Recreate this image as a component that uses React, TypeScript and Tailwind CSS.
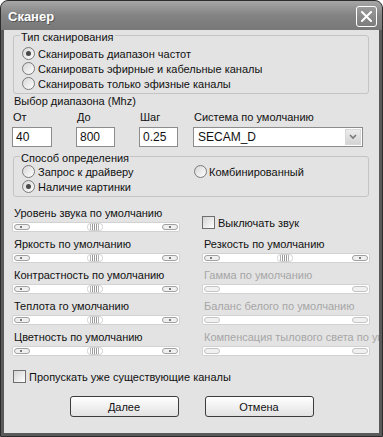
import React from "react";

function Radio({ checked }: { checked?: boolean }) {
  return (
    <span className="w-[13px] h-[13px] shrink-0 rounded-full border border-[#7a7a7a] bg-gradient-to-br from-[#d6d6d6] to-white flex items-center justify-center">
      {checked && <span className="w-[5px] h-[5px] rounded-full bg-[#484848]" />}
    </span>
  );
}

function Check() {
  return <span className="w-[13px] h-[13px] shrink-0 border border-[#6e6e6e] bg-gradient-to-br from-[#d4d4d4] to-white" />;
}

function Slider({ enabled = true }: { enabled?: boolean }) {
  const pill = enabled ? "#a0a0a0" : "#c4c4c4";
  return (
    <svg width="168" height="10" viewBox="0 0 168 10" className="block">
      <rect x="0.5" y="0.5" width="167" height="9" rx="1.5" fill="#ffffff" stroke="#d2d2d2" />
      <rect x="2.5" y="2.5" width="15" height="5" rx="2.5" fill="#f0f0f0" stroke={pill} />
      <rect x="150.5" y="2.5" width="15" height="5" rx="2.5" fill="#f0f0f0" stroke={pill} />
      {enabled && (
        <>
          <rect x="8" y="4" width="2" height="2" fill="#7a7a7a" />
          <rect x="157" y="4" width="2" height="2" fill="#7a7a7a" />
          <rect x="75.5" y="1.5" width="15" height="7" rx="3" fill="#ffffff" stroke="#d0d0d0" />
          <line x1="78.5" y1="2" x2="78.5" y2="8" stroke="#b4b4b4" />
          <line x1="80.5" y1="2" x2="80.5" y2="8" stroke="#999999" />
          <line x1="82.5" y1="2" x2="82.5" y2="8" stroke="#999999" />
          <line x1="84.5" y1="2" x2="84.5" y2="8" stroke="#999999" />
          <line x1="86.5" y1="2" x2="86.5" y2="8" stroke="#b4b4b4" />
        </>
      )}
    </svg>
  );
}

function SliderCol({ label, enabled = true }: { label: string; enabled?: boolean }) {
  return (
    <div className="flex flex-col w-[168px]">
      <span className={`pl-[2px] h-[12px] whitespace-nowrap ${enabled ? "text-[#111]" : "text-[#a6a6a6]"}`}>{label}</span>
      <div className="mt-[3px]">
        <Slider enabled={enabled} />
      </div>
    </div>
  );
}

function TextBox({ value, w }: { value: string; w: string }) {
  return (
    <div className={`${w} h-[20px] bg-white border border-[#8c8c8c] flex items-center pl-[3px] text-[12px]`}>{value}</div>
  );
}

export default function App() {
  return (
    <div className="w-[383px] h-[437px] flex flex-col font-['Liberation_Sans',Arial,sans-serif] text-[11px] leading-[12px] text-[#111] bg-[#5a5a5a] border border-[#2c2c2c] rounded-t-[8px] overflow-hidden">
      <div className="h-[29px] shrink-0 flex items-center pl-[7px] pr-[5px] pt-[2px] bg-gradient-to-b from-[#a6a6a6] via-[#838383] to-[#787878]">
        <span className="text-white font-bold text-[13px] leading-[16px] [text-shadow:1px_1px_0_#555]">Сканер</span>
        <div className="ml-auto w-[21px] h-[21px] rounded-[3px] border border-white bg-gradient-to-b from-[#9a9a9a] to-[#7c7c7c] flex items-center justify-center">
          <svg width="11" height="11" viewBox="0 0 11 11">
            <path d="M1 1 L10 10 M10 1 L1 10" stroke="#ffffff" strokeWidth="2" strokeLinecap="square" />
          </svg>
        </div>
      </div>
      <div className="flex-1 mx-[3px] mb-[3px] bg-[#e3e3e3] flex flex-col pl-[9px] pr-[10px] overflow-hidden">
        {/* group 1 */}
        <div className="relative mt-[5px] border border-[#c4c4c4] rounded-[3px] pl-[8px] pt-[10px] pb-[2px] flex flex-col">
          <span className="absolute left-[6px] top-[-5px] px-[1px] bg-[#e3e3e3] leading-[12px]">Тип сканирования</span>
          <div className="h-[15px] flex items-center gap-[3px]"><Radio checked /><span>Сканировать диапазон частот</span></div>
          <div className="h-[15px] flex items-center gap-[3px]"><Radio /><span>Сканировать эфирные и кабельные каналы</span></div>
          <div className="h-[15px] flex items-center gap-[3px]"><Radio /><span>Сканировать только эфизные каналы</span></div>
        </div>

        <div className="mt-[1px] pl-[1px] h-[12px]">Выбор диапазона (Mhz)</div>

        <div className="mt-[4px] flex -ml-[1px]">
          <div className="flex flex-col w-[40px]">
            <span className="pl-[1px] h-[12px]">От</span>
            <div className="mt-[4px]"><TextBox value="40" w="w-[40px]" /></div>
          </div>
          <div className="flex flex-col w-[39px] ml-[24px]">
            <span className="pl-[1px] h-[12px]">До</span>
            <div className="mt-[4px]"><TextBox value="800" w="w-[39px]" /></div>
          </div>
          <div className="flex flex-col w-[39px] ml-[24px]">
            <span className="pl-[1px] h-[12px]">Шаг</span>
            <div className="mt-[4px]"><TextBox value="0.25" w="w-[39px]" /></div>
          </div>
          <div className="flex flex-col w-[170px] ml-[15px]">
            <span className="pl-[1px] h-[12px]">Система по умолчанию</span>
            <div className="mt-[4px] h-[20px] bg-white border border-[#8c8c8c] flex items-center pl-[4px] text-[12px]">
              <span>SECAM_D</span>
              <div className="ml-auto mr-[1px] w-[16px] h-[16px] bg-gradient-to-b from-[#ececec] to-[#d4d4d4] border border-[#d8d8d8] flex items-center justify-center">
                <svg width="8" height="6" viewBox="0 0 8 6">
                  <path d="M1 1 L4 4 L7 1" fill="none" stroke="#7a7a7a" strokeWidth="1.6" />
                </svg>
              </div>
            </div>
          </div>
        </div>

        {/* group 2 */}
        <div className="relative mt-[9px] border border-[#c4c4c4] rounded-[3px] pl-[8px] pt-[7px] pb-[2px] flex flex-col">
          <span className="absolute left-[6px] top-[-5px] px-[1px] bg-[#e3e3e3] leading-[12px]">Способ определения</span>
          <div className="h-[15px] flex items-center">
            <div className="w-[172px] flex items-center gap-[3px]"><Radio /><span>Запрос к драйверу</span></div>
            <div className="flex items-center gap-[2px]"><Radio /><span>Комбинированный</span></div>
          </div>
          <div className="h-[15px] flex items-center gap-[3px]"><Radio checked /><span>Наличие картинки</span></div>
        </div>

        {/* sliders */}
        <div className="mt-[10px] -ml-[1px] flex flex-col gap-[6px]">
          <div className="flex gap-[22px]">
            <SliderCol label="Уровень звука по умолчанию" />
            <div className="pt-[9px] flex items-start">
              <div className="flex items-center gap-[3px]"><Check /><span>Выключать звук</span></div>
            </div>
          </div>
          <div className="flex gap-[22px]">
            <SliderCol label="Яркость по умолчанию" />
            <SliderCol label="Резкость по умолчанию" />
          </div>
          <div className="flex gap-[22px]">
            <SliderCol label="Контрастность по умолчанию" />
            <SliderCol label="Гамма по умолчанию" enabled={false} />
          </div>
          <div className="flex gap-[22px]">
            <SliderCol label="Теплота го умолчанию" />
            <SliderCol label="Баланс белого по умолчанию" enabled={false} />
          </div>
          <div className="flex gap-[22px]">
            <SliderCol label="Цветность по умолчанию" />
            <SliderCol label="Компенсация тылового света по умолчанию" enabled={false} />
          </div>
        </div>

        <div className="mt-[14px] flex items-center gap-[3px]"><Check /><span>Пропускать уже существующие каналы</span></div>

        <div className="mt-[13px] flex justify-center gap-[26px] pl-[1px]">
          <button className="w-[109px] h-[21px] rounded-[3px] border border-[#3c3c3c] bg-gradient-to-b from-white to-[#e2e2e2] text-[11px] text-[#111]">Далее</button>
          <button className="w-[109px] h-[21px] rounded-[3px] border border-[#3c3c3c] bg-gradient-to-b from-white to-[#e2e2e2] text-[11px] text-[#111]">Отмена</button>
        </div>
      </div>
    </div>
  );
}
